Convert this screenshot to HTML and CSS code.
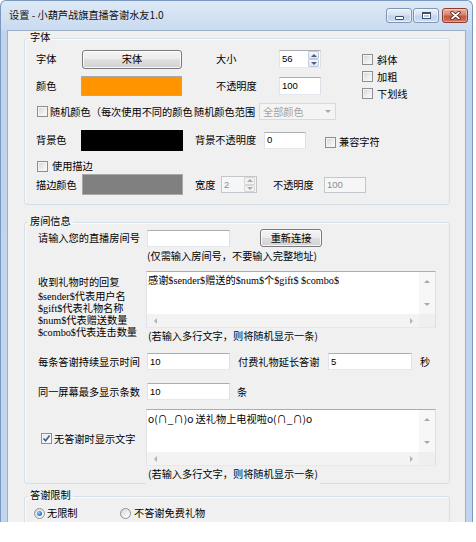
FILE: index.html
```html
<!DOCTYPE html>
<html lang="zh-CN">
<head>
<meta charset="utf-8">
<title>设置</title>
<link rel="stylesheet" href="styles.css">
</head>
<body>
<div class="window">
  <div class="titlebar">
    <span class="title">设置 - 小葫芦战旗直播答谢水友1.0</span>
    <div class="caption">
      <span class="cbtn cmin"><i class="ico-min"></i></span>
      <span class="cbtn cmax"><i class="ico-max"></i></span>
      <span class="cbtn cclose"><svg width="11" height="9" viewBox="0 0 11 9"><path d="M2 1.5 L9 7.5 M9 1.5 L2 7.5" stroke="#4a1c14" stroke-width="3.4" stroke-linecap="round"/><path d="M2 1.5 L9 7.5 M9 1.5 L2 7.5" stroke="#fff" stroke-width="1.7" stroke-linecap="round"/></svg></span>
    </div>
  </div>
  <div class="client">
    <fieldset class="group g1">
      <legend>字体</legend>
      <div class="gbody b1">
        <div class="top">
          <div class="topleft">
            <div class="row r1">
              <span class="lbl w46">字体</span>
              <span class="btn w100 h19">宋体</span>
              <span class="lbl w63 ml34">大小</span>
              <span class="edit w42 h18"><span class="val">56</span><span class="spinbtns"><span class="sb"><i class="tri up"></i></span><span class="sb"><i class="tri down"></i></span></span></span>
            </div>
            <div class="row r2">
              <span class="lbl w45">颜色</span>
              <span class="swatch sw-orange"></span>
              <span class="lbl w63 ml34">不透明度</span>
              <span class="edit w42 h18"><span class="val">100</span></span>
            </div>
          </div>
          <div class="checks">
            <div class="chk"><span class="cb"></span><span class="lbl ml4">斜体</span></div>
            <div class="chk"><span class="cb"></span><span class="lbl ml4">加粗</span></div>
            <div class="chk"><span class="cb"></span><span class="lbl ml4">下划线</span></div>
          </div>
        </div>
        <div class="row r3">
          <span class="cb ml1"></span>
          <span class="lbl randlbl">随机颜色（每次使用不同的颜色</span>
          <span class="lbl w65">随机颜色范围</span>
          <span class="combo"><span>全部颜色</span><i class="tri down dim"></i></span>
        </div>
        <div class="row r4">
          <span class="lbl w45">背景色</span>
          <span class="swatch sw-black"></span>
          <span class="lbl w69 ml12">背景不透明度</span>
          <span class="edit w42 h17"><span class="val">0</span></span>
          <span class="cb ml19 mt4"></span><span class="lbl ml3 mt4">兼容字符</span>
        </div>
        <div class="row r5">
          <span class="cb ml1"></span><span class="lbl ml4">使用描边</span>
        </div>
        <div class="row r6">
          <span class="lbl w46">描边颜色</span>
          <span class="swatch sw-gray"></span>
          <span class="lbl w26 ml12">宽度</span>
          <span class="edit disabled w36 h17"><span class="val">2</span><span class="spinbtns"><span class="sb"><i class="tri up dim"></i></span><span class="sb"><i class="tri down dim"></i></span></span></span>
          <span class="lbl w51 ml16">不透明度</span>
          <span class="edit disabled w42 h16"><span class="val">100</span></span>
        </div>
      </div>
    </fieldset>

    <fieldset class="group g2">
      <legend>房间信息</legend>
      <div class="gbody b2">
        <div class="row q1">
          <span class="lbl w109">请输入您的直播房间号</span>
          <span class="edit w83 h17"></span>
          <span class="btn w62 h18 ml30">重新连接</span>
        </div>
        <div class="note n1">(仅需输入房间号，不要输入完整地址)</div>
        <div class="row q3">
          <div class="lblcol">
            <div class="first">收到礼物时的回复</div>
            <div class="mix">$sender$代表用户名</div>
            <div class="mix">$gift$代表礼物名称</div>
            <div class="mix">$num$代表赠送数量</div>
            <div class="mix">$combo$代表连击数量</div>
          </div>
          <div class="memocol">
            <div class="memo">
              <div class="memo-main">
                <div class="memo-text mix">感谢$sender$赠送的$num$个$gift$ $combo$</div>
                <div class="vscroll"><i class="tri up dim"></i><i class="tri down dim"></i></div>
              </div>
              <div class="hscroll"><div class="track"><i class="tri left dim"></i><i class="tri right dim"></i></div><div class="corner"></div></div>
            </div>
            <div class="note n2">(若输入多行文字，则将随机显示一条)</div>
          </div>
        </div>
        <div class="row q5">
          <span class="lbl w109">每条答谢持续显示时间</span>
          <span class="edit w83 h17"><span class="val">10</span></span>
          <span class="lbl w90 ml8">付费礼物延长答谢</span>
          <span class="edit w84 h17"><span class="val">5</span></span>
          <span class="lbl ml8">秒</span>
        </div>
        <div class="row q6">
          <span class="lbl w109">同一屏幕最多显示条数</span>
          <span class="edit w83 h17"><span class="val">10</span></span>
          <span class="lbl ml7">条</span>
        </div>
        <div class="row q7">
          <div class="lblcol2">
            <span class="cb checked"><svg width="9" height="9" viewBox="0 0 9 9"><path d="M1.5 4.5 L3.6 6.8 L7.6 1.6" fill="none" stroke="#3c5a8e" stroke-width="1.6"/></svg></span>
            <span class="lbl ml2">无答谢时显示文字</span>
          </div>
          <div class="memo">
            <div class="memo-main">
              <div class="memo-text">o(∩_∩)o 送礼物上电视啦o(∩_∩)o</div>
              <div class="vscroll"><i class="tri up dim"></i><i class="tri down dim"></i></div>
            </div>
            <div class="hscroll"><div class="track"><i class="tri left dim"></i><i class="tri right dim"></i></div><div class="corner"></div></div>
          </div>
        </div>
        <div class="note n3">(若输入多行文字，则将随机显示一条)</div>
      </div>
    </fieldset>

    <fieldset class="group g3">
      <legend>答谢限制</legend>
      <div class="gbody b3">
        <div class="row radios">
          <div class="radio-item w86"><span class="rb on"></span><span class="lbl ml2">无限制</span></div>
          <div class="radio-item"><span class="rb"></span><span class="lbl ml3">不答谢免费礼物</span></div>
        </div>
      </div>
    </fieldset>
  </div>
</div>
</body>
</html>
```
FILE: styles.css
```css
* { box-sizing: border-box; }
html, body { margin: 0; padding: 0; background: #fff; }
body {
  font-family: "Noto Sans CJK SC", sans-serif;
  font-size: 10.2px;
  line-height: 12px;
  color: #000;
}

/* window frame */
.window {
  width: 473px;
  height: 522px;
  overflow: hidden;
  display: flex;
  flex-direction: column;
  border: 1px solid #7b99bf;
  border-bottom: none;
  border-radius: 6px 6px 0 0;
  background: linear-gradient(to bottom, #dde9f6 0px, #c9dbf0 29px, #bfd4ed 30px, #c1d6ee 100%);
}
.titlebar {
  height: 29px;
  flex: none;
  display: flex;
  align-items: flex-start;
  padding: 0 4px 0 8px;
}
.title { padding-top: 8px; color: #111; white-space: nowrap; }
.caption { margin-left: auto; margin-top: 7px; display: flex; }
.cbtn {
  width: 26px;
  height: 15px;
  border-radius: 3px;
  display: flex;
  align-items: center;
  justify-content: center;
}
.cmin, .cmax {
  border: 1px solid #7e95b6;
  background: linear-gradient(to bottom, #eaf1f9 0%, #d5e2f2 48%, #c2d4eb 52%, #cddef2 100%);
  box-shadow: inset 0 0 0 1px rgba(255,255,255,0.55);
}
.cmax { margin-left: 1px; }
.cclose {
  margin-left: 3px;
  border: 1px solid #8e3b2e;
  background: linear-gradient(to bottom, #eab0a3 0%, #d8806d 48%, #c4533d 52%, #d27560 100%);
  box-shadow: inset 0 0 0 1px rgba(255,255,255,0.35);
}
.ico-min {
  display: block;
  width: 9px;
  height: 4px;
  margin-top: 5px;
  border: 1px solid #3d4f6c;
  border-radius: 1px;
  background: #fff;
}
.ico-max {
  display: block;
  width: 9px;
  height: 7px;
  border: 1px solid #3d4f6c;
  border-top-width: 2px;
  background: #b9cbe3;
  box-shadow: inset 0 0 0 1px #fff;
}

.client {
  flex: 1;
  margin: 0 6px;
  background: #f0f0f0;
  border: 1px solid #9cb0c8;
  border-bottom: none;
  overflow: hidden;
}

/* group boxes */
.group {
  margin: 0 15px 0 16px;
  padding: 0;
  min-width: 0;
  border: 1px solid #d5dfe5;
  border-radius: 3px;
  box-shadow: inset 1px 1px 0 #fbfbfb;
}
.group legend {
  padding: 0 2px 2px;
  margin-left: 3px;
  line-height: 12px;
}
.g2 { margin-top: 10px; }
.g3 { margin-top: 5px; }

.b1 { padding: 4px 0 9px 11px; }
.b2 { padding: 0 0 0 13px; }
.b3 { padding: 3px 0 20px 9px; }

.row { display: flex; align-items: center; }
.lbl { white-space: nowrap; flex: none; }

.top { display: flex; align-items: flex-start; }
.r1 { height: 20px; }
.r2 { height: 20px; margin-top: 7px; }
.checks { margin-left: 41px; padding-top: 5px; display: flex; flex-direction: column; gap: 6px; }
.chk { display: flex; align-items: center; height: 11px; }
.r3 { height: 17px; margin-top: 4px; }
.r4 { height: 22px; margin-top: 9px; }
.r5 { height: 12px; margin-top: 9px; }
.r6 { height: 21px; margin-top: 2px; }

.randlbl { width: 144px; margin-left: 2px; }

/* widths / spacing helpers */
.w26 { width: 26px; } .w36 { width: 36px; } .w42 { width: 42px; } .w45 { width: 45px; }
.w46 { width: 46px; } .w51 { width: 51px; } .w62 { width: 62px; } .w63 { width: 63px; }
.w65 { width: 65px; } .w69 { width: 69px; } .w83 { width: 83px; } .w84 { width: 84px; }
.w86 { width: 86px; } .w90 { width: 90px; } .w100 { width: 100px; } .w109 { width: 109px; }
.h16 { height: 16px; } .h17 { height: 17px; } .h18 { height: 18px; } .h19 { height: 19px; }
.ml1 { margin-left: 1px; } .ml2 { margin-left: 2px; } .ml3 { margin-left: 3px; } .ml4 { margin-left: 4px; }
.ml7 { margin-left: 7px; } .ml8 { margin-left: 8px; } .ml12 { margin-left: 12px; } .ml16 { margin-left: 16px; }
.ml19 { margin-left: 19px; } .ml30 { margin-left: 30px; } .ml34 { margin-left: 34px; }
.mt4 { margin-top: 4px; }

/* controls */
.btn {
  flex: none;
  display: flex;
  align-items: center;
  justify-content: center;
  border: 1px solid #7a7a7a;
  border-radius: 3px;
  background: linear-gradient(to bottom, #f4f4f4 0%, #ececec 46%, #dedede 52%, #d2d2d2 100%);
  box-shadow: inset 0 0 0 1px rgba(255,255,255,0.8);
}
.swatch { flex: none; display: block; }
.sw-orange { width: 101px; height: 20px; background: #ff9400; border: 1px solid #a9a9a9; }
.sw-black { width: 102px; height: 21px; background: #000; }
.sw-gray { width: 101px; height: 21px; background: #808080; border: 1px solid #a8a8a8; }

.edit {
  flex: none;
  display: flex;
  align-items: center;
  background: #fff;
  border: 1px solid;
  border-color: #abadb3 #dbdfe6 #e3e9ef #e2e3ea;
}
.edit .val {
  padding-left: 2px;
  font-family: "Liberation Sans", "Noto Sans CJK SC", sans-serif;
  font-size: 9.5px;
}
.edit.disabled { background: #f6f6f6; border-color: #c3c6cb; color: #8c8c8c; }
.spinbtns {
  margin: 0 1px 0 auto;
  width: 11px;
  align-self: stretch;
  display: flex;
  flex-direction: column;
}
.sb {
  flex: 1;
  display: flex;
  align-items: center;
  justify-content: center;
  border: 1px solid #bccbdd;
  background: linear-gradient(to bottom, #f6f8fb, #e1e8f2);
  border-radius: 1px;
}
.edit.disabled .sb { border-color: #d6d6d6; background: #f2f2f2; }

.tri { display: block; width: 0; height: 0; flex: none; box-sizing: content-box; }
.tri.up { border-left: 3px solid transparent; border-right: 3px solid transparent; border-bottom: 3px solid #4c607e; }
.tri.down { border-left: 3px solid transparent; border-right: 3px solid transparent; border-top: 3px solid #4c607e; }
.tri.left { border-top: 3px solid transparent; border-bottom: 3px solid transparent; border-right: 3px solid #4c607e; }
.tri.right { border-top: 3px solid transparent; border-bottom: 3px solid transparent; border-left: 3px solid #4c607e; }
.tri.up.dim { border-bottom-color: #a9a9a9; }
.tri.down.dim { border-top-color: #a9a9a9; }
.tri.left.dim { border-right-color: #b3b3b3; }
.tri.right.dim { border-left-color: #b3b3b3; }

.combo {
  flex: none;
  width: 77px;
  height: 17px;
  display: flex;
  align-items: center;
  justify-content: space-between;
  padding: 0 4px 0 3px;
  background: #f4f4f4;
  border: 1px solid #d9d9d9;
  color: #a3a3a3;
}

.cb {
  flex: none;
  display: inline-flex;
  align-items: center;
  justify-content: center;
  width: 11px;
  height: 11px;
  border: 1px solid #8f8f8f;
  background: linear-gradient(135deg, #d0d3d8 0%, #ebedef 55%, #fdfdfd 100%);
  box-shadow: inset 0 0 0 1px #f4f4f4;
}
.cb.checked { background: linear-gradient(135deg, #e4e8ee 0%, #f6f7f9 60%, #fff 100%); }
.cb svg { display: block; }

.rb {
  flex: none;
  display: inline-flex;
  align-items: center;
  justify-content: center;
  width: 11px;
  height: 11px;
  border-radius: 50%;
  border: 1px solid #8f8f8f;
  background: linear-gradient(135deg, #d3d6da 0%, #f1f2f3 60%, #fff 100%);
}
.rb.on::after {
  content: "";
  width: 5px;
  height: 5px;
  border-radius: 50%;
  background: radial-gradient(circle at 35% 35%, #8fd0ff 0%, #2c7bd0 60%, #1b4f91 100%);
}
.radio-item { display: flex; align-items: center; flex: none; }
.radios { height: 14px; }

/* room group */
.q1 { height: 18px; }
.note { white-space: nowrap; line-height: 14px; }
.n1 { margin-top: 2px; padding-left: 109px; }
.q3 { margin-top: 8px; align-items: flex-start; }
.lblcol { width: 108px; flex: none; margin-top: 5px; }
.lblcol .first { margin-bottom: 3px; }
.mix { font-family: "Liberation Serif", "Noto Sans CJK SC", sans-serif; white-space: nowrap; }
.memocol { flex: none; }
.n2 { margin-top: 1px; padding-left: 2px; }
.q5 { height: 17px; margin-top: 10px; }
.q6 { height: 17px; margin-top: 13px; }
.q7 { margin-top: 9px; }
.lblcol2 { width: 108px; flex: none; display: flex; align-items: center; padding-left: 3px; margin-top: 2px; }
.n3 {
  width: fit-content;
  margin: 1px 0 -2px 108px;
  padding: 0 2px 4px;
  background: #f0f0f0;
}

.memo {
  flex: none;
  width: 290px;
  height: 57px;
  display: flex;
  flex-direction: column;
  background: #fff;
  border: 1px solid;
  border-color: #abadb3 #dbdfe6 #e3e9ef #e2e3ea;
}
.memo-main { flex: 1; display: flex; min-height: 0; }
.memo-text { flex: 1; padding: 3px 0 0 1px; white-space: nowrap; overflow: hidden; }
.vscroll {
  width: 16px;
  flex: none;
  display: flex;
  flex-direction: column;
  align-items: center;
  justify-content: space-between;
  padding: 8px 0;
  background: #f7f7f7;
}
.hscroll { height: 13px; flex: none; display: flex; background: #f3f3f3; }
.hscroll .track {
  flex: 1;
  display: flex;
  align-items: center;
  justify-content: space-between;
  padding: 0 6px 0 7px;
}
.hscroll .corner { width: 16px; flex: none; background: #efefef; }
```
